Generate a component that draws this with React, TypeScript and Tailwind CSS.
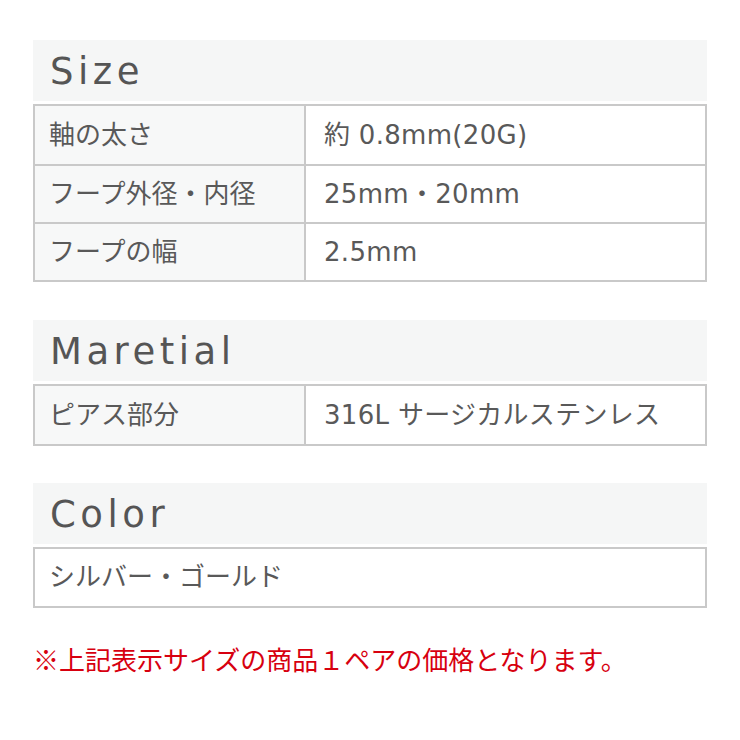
const rows = {
  size: [
    ["軸の太さ", "約 0.8mm(20G)"],
    ["フープ外径・内径", "25mm・20mm"],
    ["フープの幅", "2.5mm"],
  ],
  material: [["ピアス部分", "316L サージカルステンレス"]],
};

function Heading({ title }: { title: string }) {
  return (
    <div className="h-[61px] bg-[#f5f6f6] flex items-center pl-[17px] mb-[3px]">
      <span className="text-[37px] tracking-[4.5px] text-[#555555] leading-none pt-[2px]">{title}</span>
    </div>
  );
}

function SpecTable({ data }: { data: string[][] }) {
  return (
    <div className="border-2 border-[#c9c9c9]">
      {data.map((row, i) => (
        <div
          key={i}
          className={`flex h-[58px] ${i > 0 ? "border-t-2 border-[#c9c9c9]" : ""}`}
        >
          <div className="w-[271px] bg-[#f7f8f8] flex items-center pl-[14px] border-r-2 border-[#c9c9c9]">
            {row[0]}
          </div>
          <div className="flex-1 bg-white flex items-center pl-[18px] tracking-[0.3px]">{row[1]}</div>
        </div>
      ))}
    </div>
  );
}

export default function App() {
  return (
    <main
      className="w-[740px] h-[740px] bg-white pt-[40px] px-[33px] text-[#595959] text-[26px]"
      style={{ fontFamily: '"DejaVu Sans", "Noto Sans CJK JP", sans-serif' }}
    >
      <Heading title="Size" />
      <SpecTable data={rows.size} />

      <div className="mt-[38px]">
        <Heading title="Maretial" />
        <SpecTable data={rows.material} />
      </div>

      <div className="mt-[37px]">
        <Heading title="Color" />
        <div className="border-2 border-[#c9c9c9] h-[61px] flex items-center pl-[14px]">
          シルバー・ゴールド
        </div>
      </div>

      <p
        className="mt-[38px] text-[26px] text-[#d7000f] leading-none"
        style={{ fontFamily: '"Noto Sans CJK JP", sans-serif' }}
      >
        ※上記表示サイズの商品１ペアの価格となります。
      </p>
    </main>
  );
}
